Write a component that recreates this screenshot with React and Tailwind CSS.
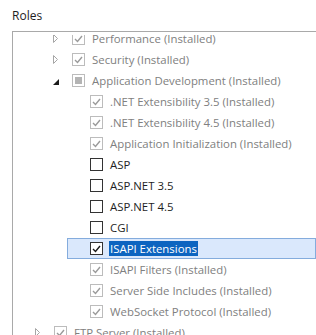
import { useState } from 'react'

// Liste des rôles à l'état "scrollé" : la première ligne passe sous le bord
// haut de la boîte, la dernière est coupée en bas.
const ROWS = [
  { label: 'Performance (Installed)', level: 1, expander: 'closed', state: 'checked', disabled: true },
  { label: 'Security (Installed)', level: 1, expander: 'closed', state: 'checked', disabled: true },
  { label: 'Application Development (Installed)', level: 1, expander: 'open', state: 'mixed', disabled: true },
  { label: '.NET Extensibility 3.5 (Installed)', level: 2, state: 'checked', disabled: true },
  { label: '.NET Extensibility 4.5 (Installed)', level: 2, state: 'checked', disabled: true },
  { label: 'Application Initialization (Installed)', level: 2, state: 'checked', disabled: true },
  { label: 'ASP', level: 2, state: 'unchecked' },
  { label: 'ASP.NET 3.5', level: 2, state: 'unchecked' },
  { label: 'ASP.NET 4.5', level: 2, state: 'unchecked' },
  { label: 'CGI', level: 2, state: 'unchecked' },
  { label: 'ISAPI Extensions', level: 2, state: 'checked', selected: true },
  { label: 'ISAPI Filters (Installed)', level: 2, state: 'checked', disabled: true },
  { label: 'Server Side Includes (Installed)', level: 2, state: 'checked', disabled: true },
  { label: 'WebSocket Protocol (Installed)', level: 2, state: 'checked', disabled: true },
  { label: 'FTP Server (Installed)', level: 0, expander: 'closed', state: 'checked', disabled: true },
]

const INDENT = ['ml-[18px]', 'ml-[36px]', 'ml-[54px]']

function Expander({ kind }) {
  if (kind === 'open') {
    return (
      <svg width="6" height="6" viewBox="0 0 6 6" className="mt-[2px]">
        <path d="M6 0 L6 6 L0 6 Z" fill="#1c1c1c" />
      </svg>
    )
  }
  if (kind === 'closed') {
    return (
      <svg width="5" height="9" viewBox="0 0 5 9">
        <path d="M0.5 0.5 L4.5 4.5 L0.5 8.5 Z" fill="none" stroke="#a6a6a6" strokeWidth="1" />
      </svg>
    )
  }
  return null
}

function Checkbox({ state, disabled }) {
  const border = disabled ? 'border-[#bcbcbc]' : 'border-[#333333]'
  return (
    <span className={`w-[13px] h-[13px] border ${border} bg-white flex items-center justify-center shrink-0`}>
      {state === 'checked' && (
        <svg width="9" height="8" viewBox="0 0 9 8">
          <path
            d="M1 4 L3.5 6.5 L8 1"
            fill="none"
            stroke={disabled ? '#9a9a9a' : '#1a1a1a'}
            strokeWidth="1.4"
          />
        </svg>
      )}
      {state === 'mixed' && <span className="w-[7px] h-[7px] bg-[#b4b4b4]" />}
    </span>
  )
}

function TreeRow({ row }) {
  const box = row.selected ? 'border border-[#84acdd] bg-[#dae8fc]' : 'border border-transparent'
  return (
    <div className={`h-[21px] flex items-center pl-[3px] ${INDENT[row.level]} ${box}`}>
      <span className="w-[19px] h-full flex items-center">
        <Expander kind={row.expander} />
      </span>
      <Checkbox state={row.state} disabled={row.disabled} />
      <span
        className={`ml-[6px] leading-[15px] px-[1px] whitespace-nowrap ${
          row.selected ? 'bg-[#0c64c0] text-white' : row.disabled ? 'text-[#808080]' : 'text-[#1e1e1e]'
        }`}
      >
        {row.label}
      </span>
    </div>
  )
}

export default function App() {
  const [rows] = useState(ROWS)
  return (
    <div
      className="w-[316px] h-[335px] bg-white overflow-hidden text-[11.4px]"
      style={{ fontFamily: '"Segoe UI", "Open Sans", "Noto Sans", sans-serif' }}
    >
      <div className="pl-[12px] pt-[7px] h-[31px] text-[#1e1e1e] text-[12px]">Roles</div>
      <div className="ml-[12px] h-[304px] border-l border-t border-[#a9a9a9] pt-[3px]">
        <div className="h-full overflow-hidden">
          <div className="-mt-[7px]">
            {rows.map((row) => (
              <TreeRow key={row.label} row={row} />
            ))}
          </div>
        </div>
      </div>
    </div>
  )
}
